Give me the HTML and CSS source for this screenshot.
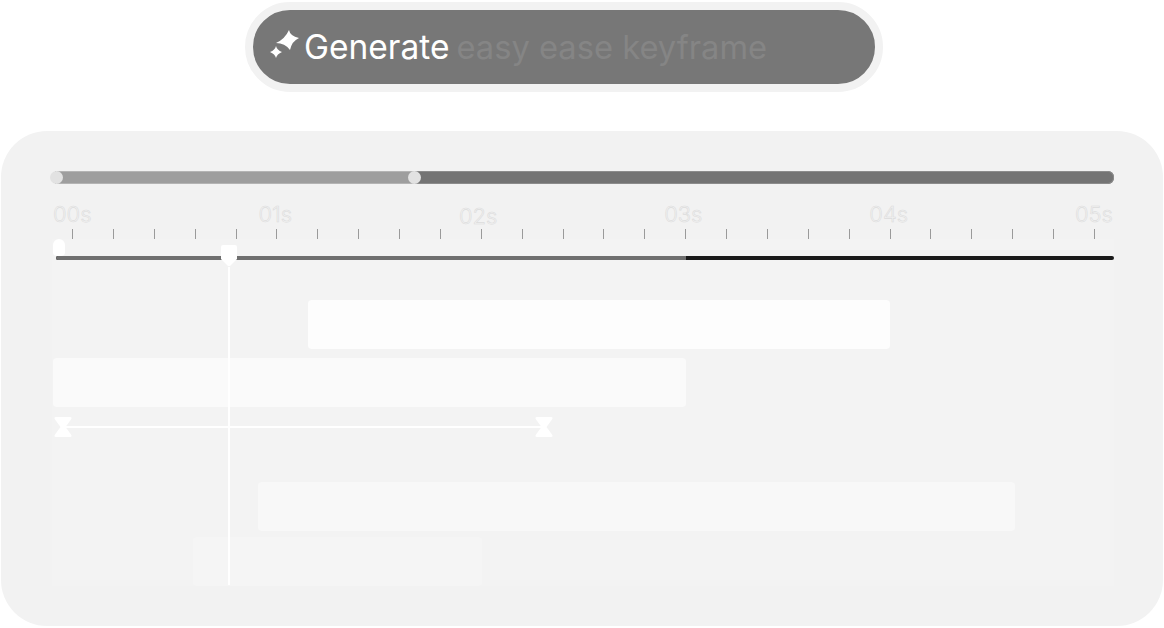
FILE: index.html
```html
<!DOCTYPE html>
<html lang="en">
<head>
    <meta charset="UTF-8">
    <meta name="viewport" content="width=device-width, initial-scale=1.0">
    <title>Generate keyframes</title>
    <link rel="stylesheet" href="styles.css">
</head>
<body>

    <!-- Prompt pill -->
    <div class="prompt">
        <svg class="sparkle" width="32" height="34" viewBox="0 0 32 34">
            <path fill="#fff" d="M20 0 Q21 6 30 8 Q23 11 21 20 Q16 13 7 13 Q16 9 20 0 Z"/>
            <path fill="#fff" d="M7 16 Q8 20 13 22 Q8 24 7 28 Q6 24 1 22 Q6 20 7 16 Z"/>
        </svg>
        <span class="prompt-label">Generate</span>
        <span class="prompt-hint">easy ease keyframe</span>
    </div>

    <!-- Timeline panel -->
    <section class="panel">
        <div class="progress">
            <div class="progress-done"></div>
            <span class="knob knob-start"></span>
            <span class="knob knob-mid"></span>
        </div>

        <div class="labels">
            <span>00s</span>
            <span>01s</span>
            <span class="label-low">02s</span>
            <span>03s</span>
            <span>04s</span>
            <span>05s</span>
        </div>

        <div class="ticks">
            <i></i><i></i><i></i><i></i><i></i><i></i><i></i><i></i><i></i><i></i><i></i><i></i><i></i>
            <i></i><i></i><i></i><i></i><i></i><i></i><i></i><i></i><i></i><i></i><i></i><i></i><i></i>
        </div>

        <div class="tracks">
            <div class="scrub">
                <div class="scrub-played"></div>
            </div>
            <span class="start-handle"></span>

            <div class="clip clip-one"></div>
            <div class="clip clip-two"></div>

            <div class="range">
                <svg class="hourglass" width="18" height="20" viewBox="0 0 18 20">
                    <path fill="#fff" d="M2 0 H16 Q18.500 0 17 2.500 L11.500 10 L17 17.500 Q18.500 20 16 20 H2 Q-.5 20 1 17.500 L6.500 10 L1 2.500 Q-.5 0 2 0 Z"/>
                </svg>
                <div class="range-line"></div>
                <svg class="hourglass" width="18" height="20" viewBox="0 0 18 20">
                    <path fill="#fff" d="M2 0 H16 Q18.500 0 17 2.500 L11.500 10 L17 17.500 Q18.500 20 16 20 H2 Q-.5 20 1 17.500 L6.500 10 L1 2.500 Q-.5 0 2 0 Z"/>
                </svg>
            </div>

            <div class="clip clip-three"></div>
            <div class="clip clip-four"></div>

            <!-- Playhead sits over the clips -->
            <div class="playhead">
                <svg width="16" height="22" viewBox="0 0 16 22">
                    <path fill="#fff" d="M2 0 H14 Q16 0 16 2 V14 L9 21 H7 L0 14 V2 Q0 0 2 0 Z"/>
                </svg>
                <div class="playhead-line"></div>
            </div>
        </div>
    </section>

</body>
</html>
```

FILE: styles.css
```css
body {
    margin: 0;
    background: #fff;
    font-family: Inter, "Liberation Sans", sans-serif;
}

.prompt {
    display: flex;
    align-items: center;
    box-sizing: border-box;
    width: 638px;
    height: 90px;
    margin: 2px 0 0 245px;
    padding-left: 16px;
    background: #777;
    border: 8px solid #f2f2f2;
    border-radius: 45px;
}

.sparkle {
    flex-shrink: 0;
    margin-right: 3px;
}

.prompt-label {
    color: #fff;
    margin-right: 7px;
    font-size: 33.500px;
}

.prompt-hint {
    color: #858585;
    font-size: 32.700px;
}

.panel {
    box-sizing: border-box;
    width: 1162px;
    height: 495px;
    margin: 39px 0 0 1px;
    padding: 40px 49px 0 51px;
    background: #f2f2f2;
    border-radius: 46px;
}

.progress {
    position: relative;
    height: 13px;
    background: #747474;
    border-radius: 6px;
    box-shadow: inset 0 0 0 1px #8c8c8c;
}

.progress-done {
    width: 362px;
    height: 13px;
    background: #9e9e9e;
    border-radius: 6px 0 0 6px;
    box-shadow: inset 0 1px 0 #b4b4b4, inset 0 -1px 0 #b4b4b4;
}

.knob {
    position: absolute;
    top: 0;
    width: 13px;
    height: 13px;
    background: #e2e2e2;
    border-radius: 50%;
}

.knob-start {
    left: -2px;
}

.knob-mid {
    left: 356px;
}

.labels {
    display: flex;
    justify-content: space-between;
    height: 24px;
    margin: 17px 1px 0;
    padding-bottom: 1px;
    font-size: 22px;
    font-weight: 300;
    line-height: 26px;
    color: #f2f2f2;
    -webkit-text-stroke: 0.6px #dcdcdc;
}

.label-low {
    margin-top: 2px;
}

.ticks {
    display: flex;
    justify-content: space-between;
    height: 10px;
    margin-top: 3px;
    padding: 0 19px 0 20px;
}

.ticks i {
    width: 1px;
    height: 10px;
    background: #9a9a9a;
}

.tracks {
    position: relative;
    height: 347px;
    background: #f3f3f3;
}

.scrub {
    position: relative;
    top: 17px;
    height: 4px;
    margin-left: 4px;
    background: #1a1a1a;
    border-radius: 2px;
}

.scrub-played {
    width: 630px;
    height: 4px;
    background: #6f6f6f;
    border-radius: 2px 0 0 2px;
}

.start-handle {
    position: absolute;
    top: 0;
    left: 1px;
    width: 12px;
    height: 17px;
    background: #fff;
    border-radius: 6px 6px 4px 4px;
}

.clip {
    height: 49px;
    border-radius: 4px;
}

.clip-one {
    width: 582px;
    margin: 57px 0 0 256px;
    background: #fdfdfd;
}

.clip-two {
    width: 633px;
    margin: 9px 0 0 1px;
    background: #fafafa;
}

.clip-three {
    width: 757px;
    margin: 45px 0 0 206px;
    background: #f8f8f8;
}

.clip-four {
    width: 289px;
    margin: 6px 0 0 141px;
    background: #f5f5f5;
}

.range {
    display: flex;
    align-items: center;
    width: 499px;
    height: 20px;
    margin: 10px 0 0 2px;
}

.range-line {
    flex: 1;
    height: 2px;
    margin: 0 -9px;
    background: #fff;
}

.hourglass {
    flex-shrink: 0;
}

.playhead {
    position: absolute;
    top: 6px;
    left: 169px;
    display: flex;
    flex-direction: column;
    align-items: center;
    width: 16px;
    height: 340px;
}

.playhead svg {
    flex-shrink: 0;
}

.playhead-line {
    flex: 1;
    width: 2px;
    background: #fff;
}
```
